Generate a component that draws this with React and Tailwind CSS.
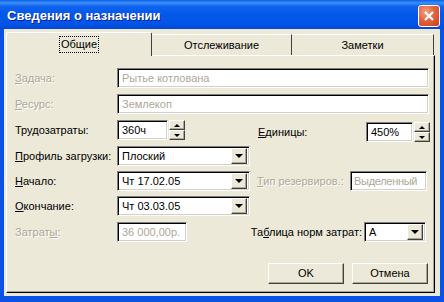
import React from 'react';

// Raised 3D button border (classic Windows look)
const raised =
  'border border-t-white border-l-white border-b-[#404040] border-r-[#404040] shadow-[inset_-1px_-1px_0_#aca899] bg-[#ece9d8]';

// Sunken field border
const sunken =
  'border border-t-[#808080] border-l-[#808080] border-b-white border-r-white shadow-[inset_1px_1px_0_#000,inset_-1px_-1px_0_#d4d0c8] bg-white';

const Label = ({ children, disabled, className = '' }) => (
  <span
    className={`whitespace-nowrap ${
      disabled ? 'text-[#aca899] [text-shadow:1px_1px_0_#fff]' : 'text-black'
    } ${className}`}
  >
    {children}
  </span>
);

const Field = ({ width, disabled, tight, children }) => (
  <div
    className={`${sunken} ${width} h-[20px] flex items-center overflow-hidden whitespace-nowrap ${
      tight ? 'pl-[3px] tracking-[-0.3px]' : 'pl-[4px]'
    } ${disabled ? 'text-[#aca899]' : 'text-black'}`}
  >
    {children}
  </div>
);

const Spinner = () => (
  <div className="flex flex-col w-[16px] h-[20px] ml-[1px]">
    <div className={`${raised} h-[10px] flex items-center justify-center`}>
      <div className="w-0 h-0 border-x-[3px] border-x-transparent border-b-[3px] border-b-black" />
    </div>
    <div className={`${raised} h-[10px] flex items-center justify-center`}>
      <div className="w-0 h-0 border-x-[3px] border-x-transparent border-t-[3px] border-t-black" />
    </div>
  </div>
);

const Combo = ({ width, value }) => (
  <div className={`${sunken} ${width} h-[20px] flex items-center p-[2px]`}>
    <span className="flex-1 pl-[2px] text-black">{value}</span>
    <div className={`${raised} w-[16px] h-[16px] flex items-center justify-center`}>
      <div className="w-0 h-0 border-x-[4px] border-x-transparent border-t-[4px] border-t-black" />
    </div>
  </div>
);

const Button = ({ children }) => (
  <button
    className={`w-[76px] h-[21px] ${raised} flex items-center justify-center text-black font-normal`}
  >
    {children}
  </button>
);

const App = () => {
  return (
    <div className="w-[444px] h-[302px] flex flex-col bg-[#0a53e4] font-['Liberation_Sans',Arial,sans-serif] text-[11px] leading-none select-none">
      {/* Title bar */}
      <div className="h-[29px] flex items-center pl-[7px] pr-[4px] bg-[linear-gradient(to_bottom,#0a5fe8_0%,#3d8ff8_10%,#0f63ee_22%,#0358e9_50%,#0255e8_80%,#0348d8_100%)]">
        <span className="flex-1 pt-[2px] text-white font-bold text-[13px] [text-shadow:1px_1px_0_#0a1e8c]">
          Сведения о назначении
        </span>
        <div className="w-[22px] h-[22px] mt-[2px] rounded-[3px] border border-white bg-[radial-gradient(circle_at_35%_30%,#f3a184_0%,#e4643f_45%,#cc3f1b_100%)] flex items-center justify-center">
          <svg width="12" height="12" viewBox="0 0 12 12">
            <path d="M2 2 L10 10 M10 2 L2 10" stroke="#fff" strokeWidth="2.2" />
          </svg>
        </div>
      </div>

      {/* Client area */}
      <div className="flex-1 mx-[4px] mb-[6px] bg-[#ece9d8] pt-[3px] pl-[2px] pr-[5px] pb-[3px] flex flex-col">
        {/* Tabs */}
        <div className="h-[23px] flex items-end">
          <div className="relative z-10 w-[146px] h-[24px] -mb-px bg-[#ece9d8] border-t border-l border-white border-r border-r-[#404040] rounded-t-[2px] flex items-center justify-center">
            <span className="border border-dotted border-black px-[1px] py-[2px]">Общие</span>
          </div>
          <div className="w-[140px] h-[21px] bg-[#ece9d8] border-t border-white border-r border-r-[#404040] flex items-center justify-center">
            Отслеживание
          </div>
          <div className="w-[142px] h-[21px] bg-[#ece9d8] border-t border-white border-r border-r-[#404040] flex items-center justify-center">
            Заметки
          </div>
        </div>

        {/* Tab panel */}
        <div className="flex-1 border-t border-l border-white border-r border-b border-r-black border-b-black shadow-[inset_-1px_-1px_0_#aca899] pt-[12px] pl-[8px] flex flex-col">
          <div className="flex items-center h-[20px]">
            <Label disabled className="w-[102px]">
              <u>З</u>адача:
            </Label>
            <Field width="w-[312px]" disabled>
              Рытье котлована
            </Field>
          </div>

          <div className="flex items-center h-[20px] mt-[6px]">
            <Label disabled className="w-[102px]">
              <u>Р</u>есурс:
            </Label>
            <Field width="w-[312px]" disabled>
              Землекоп
            </Field>
          </div>

          <div className="flex items-start h-[22px] mt-[6px]">
            <div className="flex items-center h-[20px]">
              <Label className="w-[102px]">Трудозатраты:</Label>
              <Field width="w-[51px]">360ч</Field>
              <Spinner />
            </div>
            <div className="flex items-center h-[20px] mt-[2px] ml-[73px]">
              <Label className="w-[108px]">
                <u>Е</u>диницы:
              </Label>
              <Field width="w-[47px]">450%</Field>
              <Spinner />
            </div>
          </div>

          <div className="flex items-center h-[20px] mt-[4px]">
            <Label className="w-[102px]">
              <u>П</u>рофиль загрузки:
            </Label>
            <Combo width="w-[133px]" value="Плоский" />
          </div>

          <div className="flex items-center h-[20px] mt-[5px]">
            <Label className="w-[102px]">
              <u>Н</u>ачало:
            </Label>
            <Combo width="w-[133px]" value="Чт 17.02.05" />
            <Label disabled className="w-[93px] ml-[7px]">
              <u>Т</u>ип резервиров.:
            </Label>
            <Field width="w-[77px]" disabled tight>
              Выделенный
            </Field>
          </div>

          <div className="flex items-center h-[20px] mt-[5px]">
            <Label className="w-[102px]">
              <u>О</u>кончание:
            </Label>
            <Combo width="w-[133px]" value="Чт 03.03.05" />
          </div>

          <div className="flex items-center h-[20px] mt-[6px]">
            <Label disabled className="w-[102px]">
              Затрат<u>ы</u>:
            </Label>
            <Field width="w-[70px]" disabled>
              36 000,00р.
            </Field>
            <Label className="w-[177px] text-right pr-[2px]">
              Та<u>б</u>лица норм затрат:
            </Label>
            <Combo width="w-[62px]" value="A" />
          </div>

          <div className="flex justify-end gap-[8px] mt-[21px] pr-[6px]">
            <Button>OK</Button>
            <Button>Отмена</Button>
          </div>
        </div>
      </div>
    </div>
  );
};

export default App;
